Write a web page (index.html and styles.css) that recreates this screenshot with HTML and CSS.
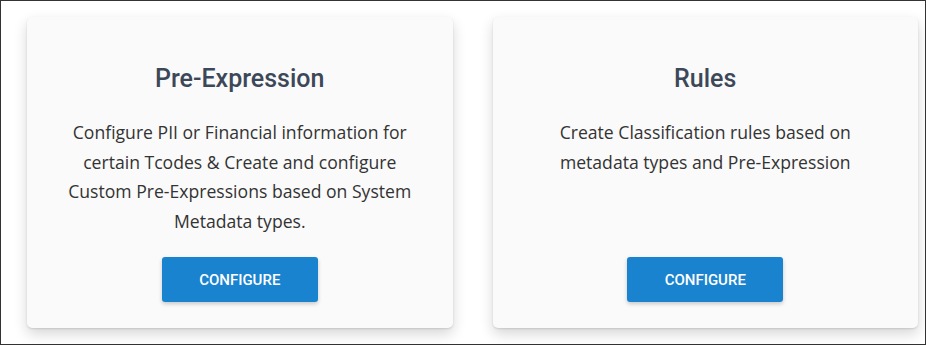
FILE: index.html
```html
<!DOCTYPE html>
<html lang="en">
<head>
  <meta charset="utf-8">
  <title>Configuration</title>
  <link rel="stylesheet" href="styles.css">
</head>
<body>
  <div class="frame">
    <div class="card">
      <h2 class="card-title">Pre-Expression</h2>
      <p class="card-text">Configure PII or Financial information for certain Tcodes &amp; Create and configure Custom Pre-Expressions based on System Metadata types.</p>
      <button class="btn" type="button">CONFIGURE</button>
    </div>
    <div class="card">
      <h2 class="card-title">Rules</h2>
      <p class="card-text">Create Classification rules based on metadata types and Pre-Expression</p>
      <button class="btn" type="button">CONFIGURE</button>
    </div>
  </div>
</body>
</html>
```

FILE: styles.css
```css
html, body {
  margin: 0;
  padding: 0;
  background: #ffffff;
}
.frame {
  box-sizing: border-box;
  width: 926px;
  height: 345px;
  border: 1px solid #333333;
  padding: 16px 7px 0 26px;
  display: flex;
  gap: 40px;
  overflow: hidden;
}
.card {
  box-sizing: border-box;
  flex: 1;
  height: 311px;
  background: #fafafa;
  border-radius: 5px;
  box-shadow: 0 1px 2px rgba(0,0,0,0.12), 0 6px 14px rgba(0,0,0,0.16);
  padding: 46px 30px 26px;
  display: flex;
  flex-direction: column;
  align-items: center;
  text-align: center;
}
.card-title {
  margin: 0;
  font-family: Roboto, "Liberation Sans", sans-serif;
  font-weight: 500;
  font-size: 25px;
  line-height: 32px;
  color: #3c4858;
}
.card-text {
  max-width: 352px;
  margin: 23px 0 0;
  font-family: "Open Sans", "Noto Sans", sans-serif;
  font-size: 17.6px;
  line-height: 29.7px;
  color: #333333;
}
.btn {
  margin-top: auto;
  width: 156px;
  height: 45px;
  border: none;
  border-radius: 3px;
  background: #1a83d0;
  color: #ffffff;
  font-family: Roboto, "Liberation Sans", sans-serif;
  font-weight: 500;
  font-size: 15px;
  box-shadow: 0 2px 4px rgba(0,0,0,0.2);
  cursor: pointer;
}
```
